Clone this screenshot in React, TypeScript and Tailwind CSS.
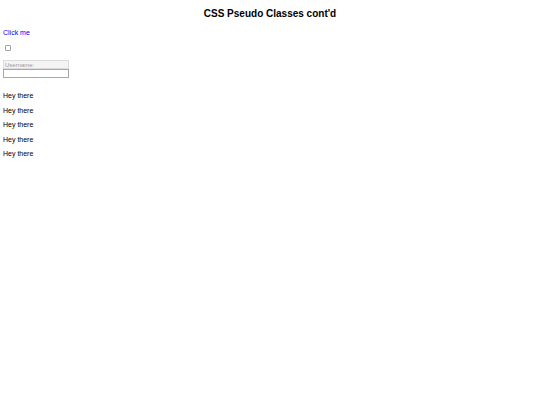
export default function App() {
  const rows = ['Hey there', 'Hey there', 'Hey there', 'Hey there', 'Hey there']
  return (
    <div className="min-h-[405px] bg-white text-black px-[3px]" style={{ fontFamily: '"Liberation Sans", Arial, sans-serif' }}>
      <h2 className="pt-[7px] text-center text-[10px] font-bold leading-[14px]">CSS Pseudo Classes cont'd</h2>
      <a href="#" className="mt-[7px] block text-[7px] leading-[9px] text-[#0000ee]">Click me</a>
      <div className="mt-[6px] flex h-[10px] items-center">
        <input type="checkbox" className="ml-[2px] h-[6px] w-[6px] appearance-none rounded-[1px] border border-[#a0a0a0] bg-white" />
      </div>
      <div className="mt-[7px] flex flex-col">
        <input
          placeholder="Username:"
          className="h-[9px] w-[66px] border border-[#dcdcdc] bg-[#f4f4f4] px-[1px] text-[6px] leading-none outline-none placeholder:text-[#9a9a9a]"
        />
        <input className="h-[9px] w-[66px] border border-[#a8a8a8] bg-white px-[1px] text-[6px] outline-none" />
      </div>
      <div className="mt-[13px] flex flex-col gap-[5px]">
        {rows.map((r, i) => (
          <p key={i} className="text-[7px] leading-[9.5px]">{r}</p>
        ))}
      </div>
    </div>
  )
}
